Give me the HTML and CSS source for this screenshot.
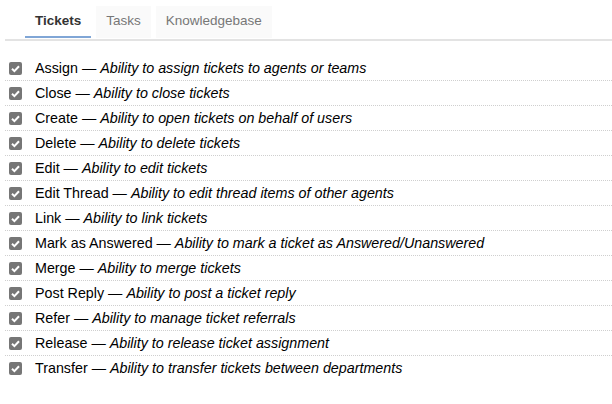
FILE: index.html
```html
<!DOCTYPE html>
<html>
<head>
<meta charset="utf-8">
<link rel="stylesheet" href="styles.css">
</head>
<body>
<nav class="tabs">
  <div class="tab active">Tickets</div>
  <div class="tab">Tasks</div>
  <div class="tab">Knowledgebase</div>
</nav>
<ul class="perms">
  <li><span class="cb"><svg viewBox="0 0 13 13" width="13" height="13"><rect width="13" height="13" rx="2" fill="#767676"/><path d="M3 6.8 L5.4 9.1 L10 4.2" fill="none" stroke="#fff" stroke-width="2"/></svg></span><span class="label">Assign — <em>Ability to assign tickets to agents or teams</em></span></li>
  <li><span class="cb"><svg viewBox="0 0 13 13" width="13" height="13"><rect width="13" height="13" rx="2" fill="#767676"/><path d="M3 6.8 L5.4 9.1 L10 4.2" fill="none" stroke="#fff" stroke-width="2"/></svg></span><span class="label">Close — <em>Ability to close tickets</em></span></li>
  <li><span class="cb"><svg viewBox="0 0 13 13" width="13" height="13"><rect width="13" height="13" rx="2" fill="#767676"/><path d="M3 6.8 L5.4 9.1 L10 4.2" fill="none" stroke="#fff" stroke-width="2"/></svg></span><span class="label">Create — <em>Ability to open tickets on behalf of users</em></span></li>
  <li><span class="cb"><svg viewBox="0 0 13 13" width="13" height="13"><rect width="13" height="13" rx="2" fill="#767676"/><path d="M3 6.8 L5.4 9.1 L10 4.2" fill="none" stroke="#fff" stroke-width="2"/></svg></span><span class="label">Delete — <em>Ability to delete tickets</em></span></li>
  <li><span class="cb"><svg viewBox="0 0 13 13" width="13" height="13"><rect width="13" height="13" rx="2" fill="#767676"/><path d="M3 6.8 L5.4 9.1 L10 4.2" fill="none" stroke="#fff" stroke-width="2"/></svg></span><span class="label">Edit — <em>Ability to edit tickets</em></span></li>
  <li><span class="cb"><svg viewBox="0 0 13 13" width="13" height="13"><rect width="13" height="13" rx="2" fill="#767676"/><path d="M3 6.8 L5.4 9.1 L10 4.2" fill="none" stroke="#fff" stroke-width="2"/></svg></span><span class="label">Edit Thread — <em>Ability to edit thread items of other agents</em></span></li>
  <li><span class="cb"><svg viewBox="0 0 13 13" width="13" height="13"><rect width="13" height="13" rx="2" fill="#767676"/><path d="M3 6.8 L5.4 9.1 L10 4.2" fill="none" stroke="#fff" stroke-width="2"/></svg></span><span class="label">Link — <em>Ability to link tickets</em></span></li>
  <li><span class="cb"><svg viewBox="0 0 13 13" width="13" height="13"><rect width="13" height="13" rx="2" fill="#767676"/><path d="M3 6.8 L5.4 9.1 L10 4.2" fill="none" stroke="#fff" stroke-width="2"/></svg></span><span class="label">Mark as Answered — <em>Ability to mark a ticket as Answered/Unanswered</em></span></li>
  <li><span class="cb"><svg viewBox="0 0 13 13" width="13" height="13"><rect width="13" height="13" rx="2" fill="#767676"/><path d="M3 6.8 L5.4 9.1 L10 4.2" fill="none" stroke="#fff" stroke-width="2"/></svg></span><span class="label">Merge — <em>Ability to merge tickets</em></span></li>
  <li><span class="cb"><svg viewBox="0 0 13 13" width="13" height="13"><rect width="13" height="13" rx="2" fill="#767676"/><path d="M3 6.8 L5.4 9.1 L10 4.2" fill="none" stroke="#fff" stroke-width="2"/></svg></span><span class="label">Post Reply — <em>Ability to post a ticket reply</em></span></li>
  <li><span class="cb"><svg viewBox="0 0 13 13" width="13" height="13"><rect width="13" height="13" rx="2" fill="#767676"/><path d="M3 6.8 L5.4 9.1 L10 4.2" fill="none" stroke="#fff" stroke-width="2"/></svg></span><span class="label">Refer — <em>Ability to manage ticket referrals</em></span></li>
  <li><span class="cb"><svg viewBox="0 0 13 13" width="13" height="13"><rect width="13" height="13" rx="2" fill="#767676"/><path d="M3 6.8 L5.4 9.1 L10 4.2" fill="none" stroke="#fff" stroke-width="2"/></svg></span><span class="label">Release — <em>Ability to release ticket assignment</em></span></li>
  <li><span class="cb"><svg viewBox="0 0 13 13" width="13" height="13"><rect width="13" height="13" rx="2" fill="#767676"/><path d="M3 6.8 L5.4 9.1 L10 4.2" fill="none" stroke="#fff" stroke-width="2"/></svg></span><span class="label">Transfer — <em>Ability to transfer tickets between departments</em></span></li>
</ul>
</body>
</html>
```
FILE: styles.css
```css
html, body {
  margin: 0;
  padding: 0;
  background: #fff;
  font-family: "Liberation Sans", Arial, sans-serif;
  color: #000;
}

.tabs {
  display: flex;
  gap: 5px;
  margin: 0 0 0 5px;
  padding: 6px 0 0 20px;
  border-bottom: 2px solid #e3e3e3;
}

.tab {
  height: 30px;
  line-height: 30px;
  padding: 0 10px;
  font-size: 13.5px;
  color: #777;
  background: #fafafa;
  border-bottom: 2px solid transparent;
  margin-bottom: 1px;
}

.tab.active {
  background: #fff;
  color: #333;
  font-weight: bold;
  border-bottom-color: #80a6d6;
}

.perms {
  list-style: none;
  margin: 15px 0 0 5px;
  padding: 0;
}

.perms li {
  display: flex;
  align-items: center;
  height: 24px;
  font-size: 14.3px;
  border-bottom: 1px dotted #cfcfcf;
  white-space: nowrap;
}

.perms li:last-child {
  border-bottom: none;
}

.label {
  white-space: pre;
}

.cb {
  display: flex;
  width: 13px;
  height: 13px;
  margin: 1px 13px 0 4px;
}
```
